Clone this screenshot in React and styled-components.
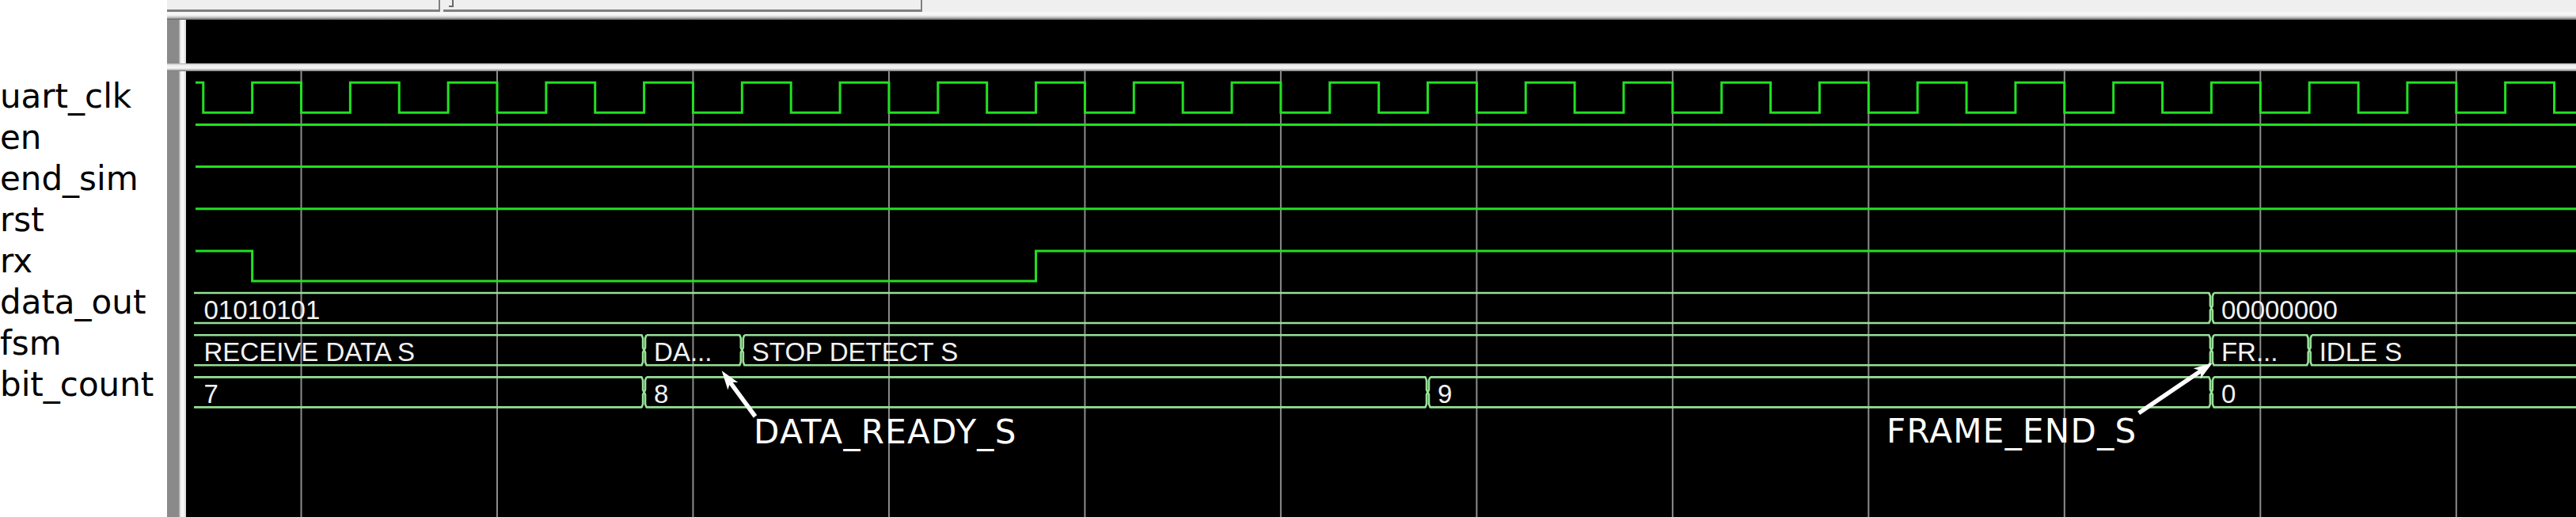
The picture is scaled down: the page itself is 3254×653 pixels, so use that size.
import React from "react";
import styled, { createGlobalStyle } from "styled-components";

const GlobalStyle = createGlobalStyle`
  html, body {
    margin: 0;
    padding: 0;
    background: #fff;
    overflow: hidden;
  }
`;

// timing of the simulation view (page pixels)
const P = 123.74;
const FALL0 = 380.5;
const RISE0 = FALL0 - P / 2;
const WAVE_X0 = 247;
const BUS_X0 = 245;
const X_END = 3260;
const ROW0 = 104.3;
const PITCH = 53.15;
const SWING = 38;

const rowTop = (i) => ROW0 + PITCH * i;
const rise = (k) => RISE0 + k * P;
const f = (n) => Number(n.toFixed(2));

const Screen = styled.div`
  display: flex;
  width: 3254px;
  height: 653px;
  background: #fff;
  overflow: hidden;
`;

const NamePanel = styled.div`
  width: 211px;
  flex-shrink: 0;
  display: flex;
  flex-direction: column;
  padding-top: 96px;
  box-sizing: border-box;
`;

const SignalName = styled.div`
  height: 52px;
  line-height: 52px;
  font-family: "DejaVu Sans", sans-serif;
  font-size: 42px;
  color: #000;
  white-space: nowrap;
`;

const Viewer = styled.div`
  flex: 1;
  min-width: 0;
  display: flex;
  flex-direction: column;
`;

const Toolbar = styled.div`
  height: 15px;
  flex-shrink: 0;
  display: flex;
  gap: 4px;
  background: #efefef;
`;

const ToolBox = styled.div`
  width: ${(p) => p.$w}px;
  box-sizing: border-box;
  display: flex;
  padding-left: ${(p) => p.$pad || 0}px;
  border-right: 2px solid #7f7f7f;
  border-bottom: 3px solid #7f7f7f;
`;

const Tick = styled.span`
  width: 4px;
  height: 7px;
  border-right: 2px solid #6a6a6a;
  border-bottom: 2px solid #6a6a6a;
`;

const TopShade = styled.div`
  height: 10px;
  flex-shrink: 0;
  background: linear-gradient(
    to bottom,
    #f6f6f6 0,
    #f6f6f6 4px,
    #c4c4c4 7px,
    #5c5c5c 10px
  );
`;

const PaneRow = styled.div`
  display: flex;
  height: ${(p) => (p.$h ? `${p.$h}px` : "auto")};
  flex: ${(p) => (p.$h ? "0 0 auto" : "1")};
  min-height: 0;
`;

const Splitter = styled.div`
  width: 24px;
  flex-shrink: 0;
  background: linear-gradient(
    to right,
    #8a8a8a 0,
    #8a8a8a 15px,
    #cfcfcf 16px,
    #f7f7f7 18px,
    #f7f7f7 21px,
    #d2d2d2 24px
  );
`;

const HeaderStrip = styled.div`
  flex: 1;
  background: #000;
`;

const Separator = styled.div`
  height: 10px;
  flex-shrink: 0;
  background: linear-gradient(
    to bottom,
    #a8a8a8 0,
    #ececec 2px,
    #f6f6f6 6px,
    #c4c4c4 8px,
    #6c6c6c 10px
  );
`;

const Waves = styled.div`
  flex: 1;
  min-width: 0;
  background: #000;
  overflow: hidden;
`;

const Chart = styled.svg`
  display: block;
  width: 100%;
  height: 100%;
`;

const GridLine = styled.line`
  stroke: #8c8c8c;
  stroke-width: 2;
`;

const BitTrace = styled.path`
  fill: none;
  stroke: #22e022;
  stroke-width: 3;
  stroke-linejoin: miter;
`;

const BusTrace = styled.path`
  fill: none;
  stroke: #96e196;
  stroke-width: 2.6;
  stroke-linejoin: round;
`;

const ValueText = styled.text`
  font-family: "Liberation Sans", Arial, sans-serif;
  font-size: 33px;
  fill: #f2f2f2;
`;

const CalloutText = styled.text`
  font-family: "DejaVu Sans", sans-serif;
  font-size: 42px;
  letter-spacing: 1.3px;
  fill: #fff;
`;

const names = [
  "uart_clk",
  "en",
  "end_sim",
  "rst",
  "rx",
  "data_out",
  "fsm",
  "bit_count",
];

const clockEdges = () => {
  const edges = [];
  for (let x = FALL0 - P; x < X_END; x += P / 2) edges.push(x);
  return edges;
};

const bits = [
  { row: 0, high: true, edges: clockEdges() },
  { row: 1, high: true, edges: [] },
  { row: 2, high: true, edges: [] },
  { row: 3, high: true, edges: [] },
  { row: 4, high: true, edges: [rise(0), rise(8)] },
];

const buses = [
  {
    row: 5,
    segs: [
      [BUS_X0, "01010101"],
      [rise(20), "00000000"],
    ],
  },
  {
    row: 6,
    segs: [
      [BUS_X0, "RECEIVE DATA S"],
      [rise(4), "DA..."],
      [rise(5), "STOP DETECT S"],
      [rise(20), "FR..."],
      [rise(21), "IDLE S"],
    ],
  },
  {
    row: 7,
    segs: [
      [BUS_X0, "7"],
      [rise(4), "8"],
      [rise(12), "9"],
      [rise(20), "0"],
    ],
  },
];

const callouts = [
  { text: "DATA_READY_S", x: 952, y: 559.5, from: [954, 526], to: [911.7, 468.3] },
  { text: "FRAME_END_S", x: 2383, y: 559.3, from: [2701.7, 521.7], to: [2795, 458.3] },
];

function bitPath({ row, high, edges }) {
  const hi = rowTop(row);
  const lo = hi + SWING;
  let level = high;
  let d = `M${WAVE_X0} ${f(level ? hi : lo)}`;
  edges.forEach((x) => {
    level = !level;
    d += ` H${f(x)} V${f(level ? hi : lo)}`;
  });
  return `${d} H${X_END}`;
}

function busPath(row, segs) {
  const top = f(rowTop(row));
  const bot = f(top + SWING);
  const mid = f((top + bot) / 2);
  let d = "";
  segs.forEach(([s], idx) => {
    const e = idx + 1 < segs.length ? segs[idx + 1][0] : null;
    const left = f(idx === 0 ? s : s + 3);
    const right = f(e === null ? X_END : e - 3);
    d += `M${left} ${top} H${right} `;
    if (e !== null) {
      d += `L${f(e - 1.5)} ${top + 4} V${mid - 3} L${f(e)} ${mid} L${f(e - 1.5)} ${mid + 3} V${bot - 4} L${right} ${bot} `;
    } else {
      d += `M${right} ${bot} `;
    }
    d += `H${left} `;
    if (idx > 0) {
      d += `L${f(s + 1.5)} ${bot - 4} V${mid + 3} L${f(s)} ${mid} L${f(s + 1.5)} ${mid - 3} V${top + 4} L${left} ${top} `;
    }
  });
  return d;
}

function Arrow({ from, to }) {
  const dx = to[0] - from[0];
  const dy = to[1] - from[1];
  const len = Math.hypot(dx, dy);
  const ux = dx / len;
  const uy = dy / len;
  const nx = -uy;
  const ny = ux;
  const bx = to[0] - 24 * ux;
  const by = to[1] - 24 * uy;
  const kx = to[0] - 18 * ux;
  const ky = to[1] - 18 * uy;
  const pts = [
    [to[0], to[1]],
    [bx + 8 * nx, by + 8 * ny],
    [kx, ky],
    [bx - 8 * nx, by - 8 * ny],
  ]
    .map(([x, y]) => `${f(x)},${f(y)}`)
    .join(" ");
  return (
    <g>
      <line
        x1={from[0]}
        y1={from[1]}
        x2={f(kx)}
        y2={f(ky)}
        stroke="#fff"
        strokeWidth="5.5"
      />
      <polygon points={pts} fill="#fff" />
    </g>
  );
}

function WaveChart() {
  const grid = [];
  for (let x = FALL0; x < X_END; x += 2 * P) grid.push(x);

  return (
    <Chart viewBox="235 90 3019 563" preserveAspectRatio="xMinYMin meet">
      {grid.map((x) => (
        <GridLine key={x} x1={f(x)} x2={f(x)} y1={90} y2={653} />
      ))}
      {bits.map((b) => (
        <BitTrace key={b.row} d={bitPath(b)} />
      ))}
      {buses.map((b) => (
        <g key={b.row}>
          <BusTrace d={busPath(b.row, b.segs)} />
          {b.segs.map(([s, label]) => (
            <ValueText key={s} x={f(s + 12.5)} y={f(rowTop(b.row) + 32.5)}>
              {label}
            </ValueText>
          ))}
        </g>
      ))}
      {callouts.map((c) => (
        <g key={c.text}>
          <Arrow from={c.from} to={c.to} />
          <CalloutText x={c.x} y={c.y}>
            {c.text}
          </CalloutText>
        </g>
      ))}
    </Chart>
  );
}

function App() {
  return (
    <>
      <GlobalStyle />
      <Screen>
        <NamePanel>
          {names.map((n) => (
            <SignalName key={n}>{n}</SignalName>
          ))}
        </NamePanel>
        <Viewer>
          <Toolbar>
            <ToolBox $w={345} />
            <ToolBox $w={605} $pad={7}>
              <Tick />
            </ToolBox>
          </Toolbar>
          <TopShade />
          <PaneRow $h={55}>
            <Splitter />
            <HeaderStrip />
          </PaneRow>
          <Separator />
          <PaneRow>
            <Splitter />
            <Waves>
              <WaveChart />
            </Waves>
          </PaneRow>
        </Viewer>
      </Screen>
    </>
  );
}

export default App;
